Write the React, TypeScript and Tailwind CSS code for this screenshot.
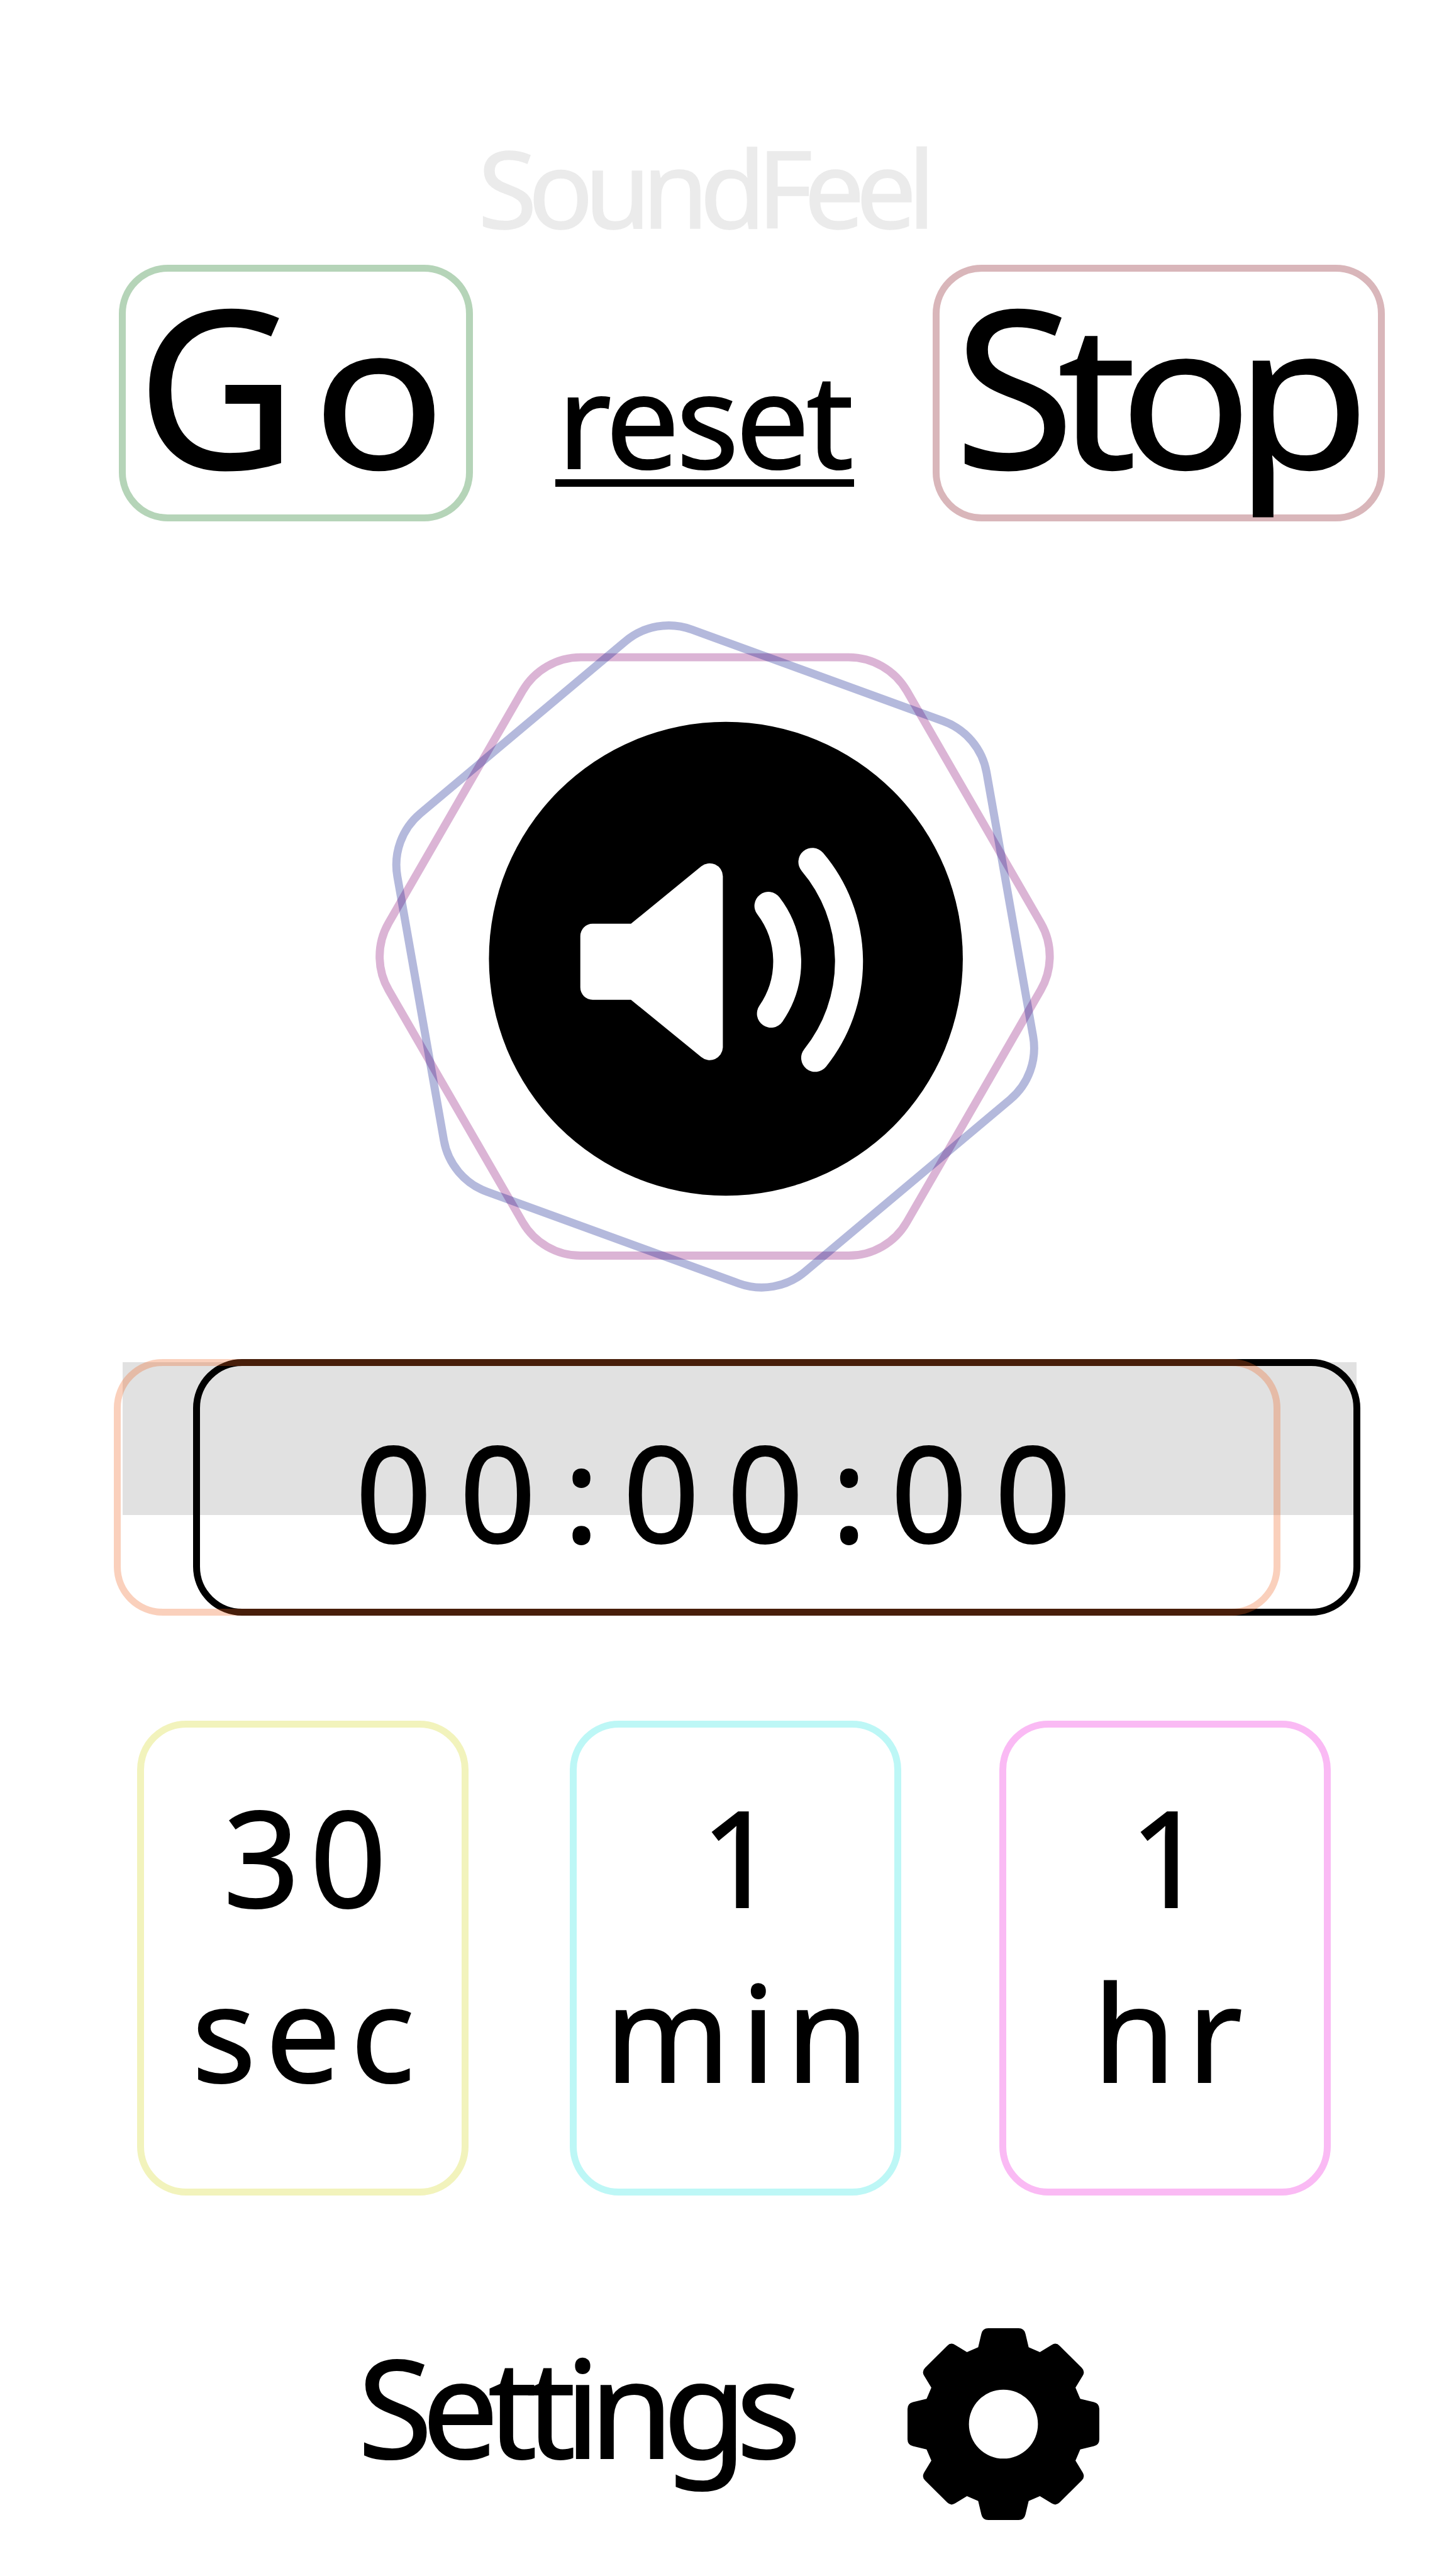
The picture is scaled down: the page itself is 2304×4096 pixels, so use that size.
import React from "react";

type Point = [x: number, y: number, cut: number];

/** Closed polygon whose corners are rounded with a quadratic curve, `cut` units along each edge. */
function roundedPolygon(points: Point[]): string {
  const n = points.length;
  const parts = points.map(([x, y, cut], i) => {
    const [px, py] = points[(i + n - 1) % n];
    const [nx, ny] = points[(i + 1) % n];
    const dp = Math.hypot(px - x, py - y);
    const dn = Math.hypot(nx - x, ny - y);
    const a = [x + ((px - x) * cut) / dp, y + ((py - y) * cut) / dp];
    const b = [x + ((nx - x) * cut) / dn, y + ((ny - y) * cut) / dn];
    return `${i ? "L" : "M"}${a[0].toFixed(2)},${a[1].toFixed(2)}Q${x.toFixed(2)},${y.toFixed(2)} ${b[0].toFixed(2)},${b[1].toFixed(2)}`;
  });
  return parts.join("") + "Z";
}

const gearQuarter: Point[] = [
  [-146.1, -93.9, 9],
  [-93.9, -146.1, 9],
  [-65, -128.5, 0],
  [-45, -137, 0],
  [-37, -171, 10],
  [37, -171, 10],
  [45, -137, 0],
  [65, -128.5, 0],
];

const gearPath = roundedPolygon(
  [0, 1, 2, 3].flatMap((q) =>
    gearQuarter.map(([x, y, c]): Point => {
      if (q === 0) return [x, y, c];
      if (q === 1) return [-y, x, c];
      if (q === 2) return [-x, -y, c];
      return [y, -x, c];
    }),
  ),
);

/** Hexagon with flat top: edge distance 534.4, corner arcs of radius 120. */
const hexPath = (() => {
  const R = 617;
  const cut = 69.3;
  let d = "";
  for (let i = 0; i < 6; i++) {
    const at = (k: number) => [R * Math.cos((k * Math.PI) / 3), R * Math.sin((k * Math.PI) / 3)];
    const [x, y] = at(i);
    const [px, py] = at(i - 1);
    const [nx, ny] = at(i + 1);
    const t = cut / R;
    d += `${i ? "L" : "M"}${(x + (px - x) * t).toFixed(2)},${(y + (py - y) * t).toFixed(2)}`;
    d += `A120,120 0 0 1 ${(x + (nx - x) * t).toFixed(2)},${(y + (ny - y) * t).toFixed(2)}`;
  }
  return d + "Z";
})();

function SpeakerEmblem() {
  return (
    <svg className="ml-[588px] mt-[150px] block h-[1083px] w-[1095px] shrink-0" viewBox="660 1100 1230 1216" fill="none">
      <path d={hexPath} transform="translate(1276 1708.4)" stroke="#870873" strokeOpacity={0.3} strokeWidth={14.5} />
      <path d={hexPath} transform="translate(1277 1708.4) rotate(20)" stroke="#05168a" strokeOpacity={0.3} strokeWidth={14.5} />
      <circle cx={1296} cy={1712.5} r={423.2} fill="#000" />
      <path
        d="M1036,1672A22,22 0 0 1 1058,1650L1126.5,1650L1252,1547.5A23.5,23.5 0 0 1 1290.6,1565L1290.6,1871A23.5,23.5 0 0 1 1252,1888L1126.5,1785.7L1058,1785.7A22,22 0 0 1 1036,1763.7Z"
        fill="#fff"
      />
      <path d="M1372,1618A164,164 0 0 1 1376.5,1810.5" stroke="#fff" strokeWidth={50} strokeLinecap="round" />
      <path d="M1450.5,1539.5A275,275 0 0 1 1455.5,1889.5" stroke="#fff" strokeWidth={50} strokeLinecap="round" />
    </svg>
  );
}

function Controls() {
  return (
    <div className="mt-[39px] flex h-[408px] shrink-0 pl-[189px] [-webkit-text-stroke:2px_black]">
      <button className="flex w-[563px] items-start rounded-[78px] border-[11px] border-[#b5d4b8] pl-[17px] pt-[3px] text-[350px] leading-none tracking-[25px]">
        G<span className="inline-block origin-[50%_88.8%] scale-y-[0.915]">o</span>
      </button>
      <div className="ml-[131px] w-[475px] pt-[139px]">
        <div className="whitespace-nowrap pl-[3px] text-[209px] leading-none tracking-[-5.5px]">reset</div>
        <div className="-mt-[7px] h-[12px] bg-black" />
      </div>
      <button className="ml-[125px] flex w-[719px] items-start rounded-[78px] border-[11px] border-[#d9b6ba] pl-[23px] pt-[3px] text-[350px] leading-none tracking-[-28px]">
        S<span className="inline-block origin-[50%_88.8%] scale-y-[0.91]">top</span>
      </button>
    </div>
  );
}

function Timer() {
  return (
    <div className="relative mt-[99px] h-[408px] shrink-0 pl-[307px]">
      <div className="absolute left-[195px] top-[5px] h-[243px] w-[1962px] bg-[#e1e1e1]" />
      <div className="relative h-[408px] w-[1856px] rounded-[78px] border-[11px] border-black pl-[247px] pt-[92px] text-[213px] leading-none tracking-[43.6px] [-webkit-text-stroke:2px_black]">
        00<span className="-mr-[6px]">:</span>00<span className="-mr-[6px]">:</span>00
      </div>
      <div className="absolute left-[181px] top-0 h-[408px] w-[1855px] rounded-[78px] border-[11px] border-[#ed6421]/30" />
    </div>
  );
}

function Presets() {
  const card =
    "flex h-[755px] w-[527px] flex-col items-start rounded-[78px] border-[11px] pt-[64px] text-[213px] leading-[278px] [-webkit-text-stroke:2px_black]";
  return (
    <div className="mt-[167px] flex shrink-0 pl-[218px]">
      <button className={card + " border-[#f2f3bc]"}>
        <span className="pl-[126px] tracking-[16px]">30</span>
        <span className="pl-[76px] tracking-[15px]">sec</span>
      </button>
      <button className={card + " ml-[161px] border-[#bdf7f6]"}>
        <span className="pl-[197px]">1</span>
        <span className="pl-[45px] tracking-[17px]">min</span>
      </button>
      <button className={card + " ml-[156px] border-[#fabaf4]"}>
        <span className="pl-[196px]">1</span>
        <span className="pl-[138px] tracking-[18px]">hr</span>
      </button>
    </div>
  );
}

export default function App() {
  return (
    <main className="flex h-[4096px] w-[2304px] flex-col overflow-hidden bg-white pt-[211px] font-['Noto_Sans',sans-serif] text-black">
      <h1 className="ml-[760px] shrink-0 whitespace-nowrap text-[171px] leading-none tracking-[-14px] text-[#ebebeb] [-webkit-text-stroke:1.5px_#ebebeb]">
        SoundFeel
      </h1>
      <Controls />
      <SpeakerEmblem />
      <Timer />
      <Presets />
      <div className="mt-[211px] flex shrink-0 items-start pl-[569px]">
        <div className="w-[874px] whitespace-nowrap pt-[15px] text-[216px] leading-none tracking-[-16.7px] [-webkit-text-stroke:2px_black]">
          Settings
        </div>
        <svg className="h-[305px] w-[305px]" viewBox="-171 -171 342 342">
          <path d={gearPath + "M61.5,0A61.5,61.5 0 1 0 -61.5,0A61.5,61.5 0 1 0 61.5,0Z"} fillRule="evenodd" fill="#000" />
        </svg>
      </div>
    </main>
  );
}
